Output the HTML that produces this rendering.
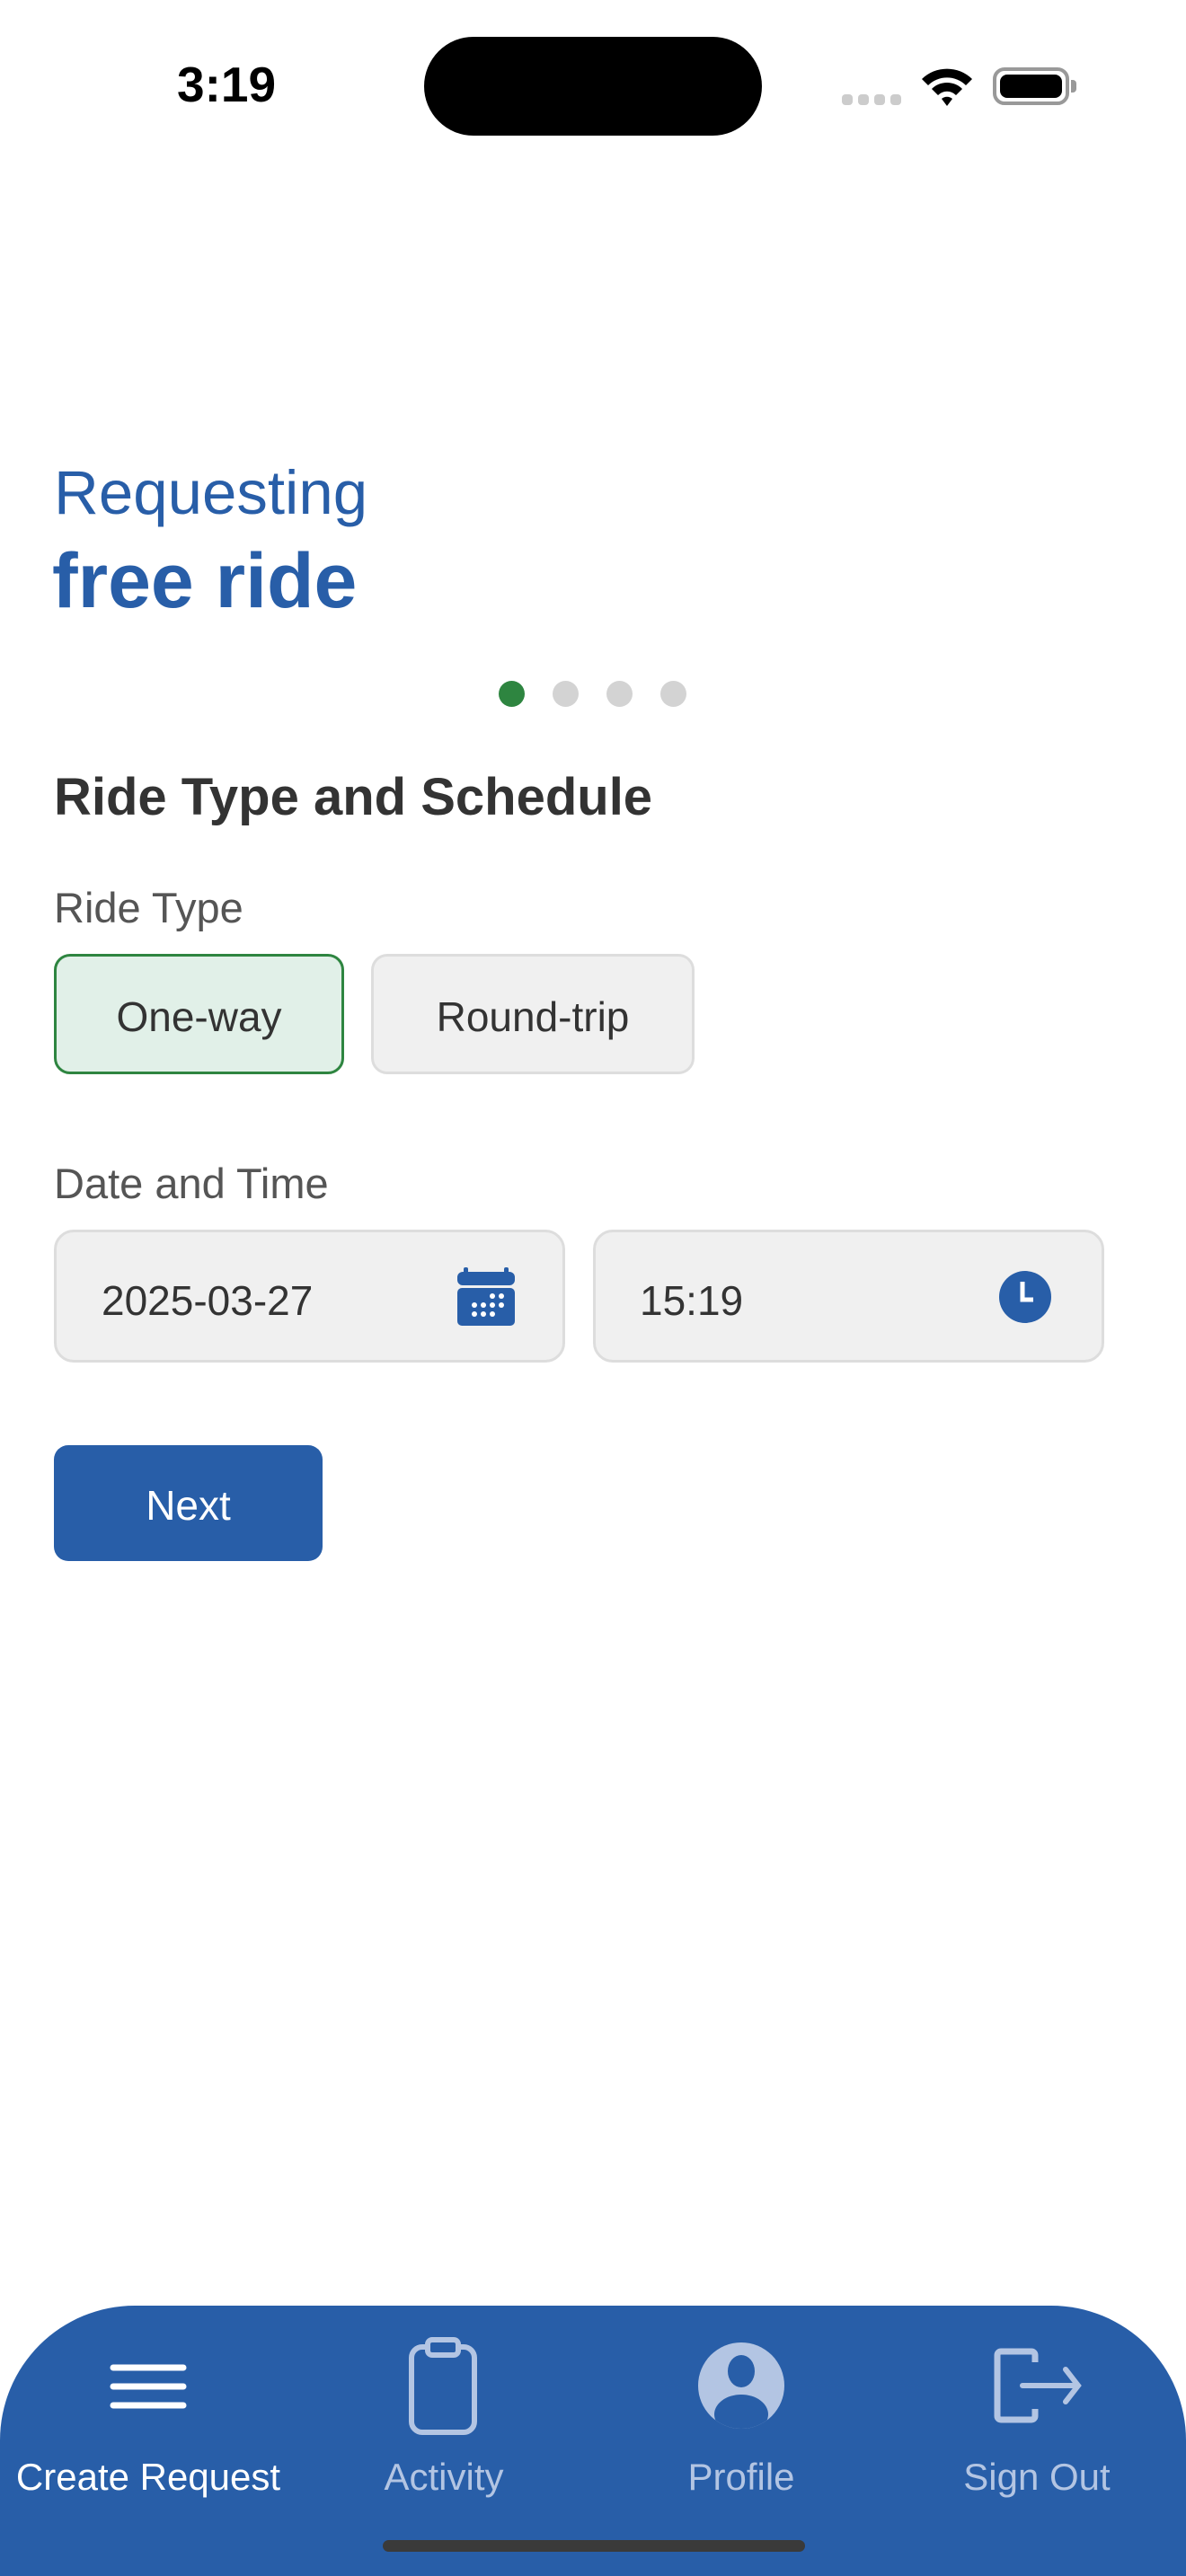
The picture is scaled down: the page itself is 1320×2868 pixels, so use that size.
<!DOCTYPE html>
<html><head><meta charset="utf-8"><style>
*{margin:0;padding:0;box-sizing:border-box}
body{width:1320px;height:2868px;background:#fff;position:relative;overflow:hidden;font-family:"Liberation Sans",sans-serif}
.a{position:absolute;white-space:nowrap;line-height:1}
.btn{position:absolute;border-radius:18px;display:flex;align-items:center;justify-content:center;font-size:46px;color:#333;padding-top:5px}
.inp{position:absolute;top:1369px;height:148px;width:569px;background:#f0f0f0;border:3px solid #ddd;border-radius:22px}
.dot{position:absolute;top:758px;width:29px;height:29px;border-radius:50%;background:#d3d3d3}
.tab{position:absolute;top:2737px;font-size:42px;color:#b3c5e3;line-height:1;text-align:center;width:330px}
</style></head><body>
<div class="a" style="left:197px;top:67px;font-size:55px;font-weight:bold;color:#000">3:19</div>
<div style="position:absolute;left:472px;top:41px;width:376px;height:110px;border-radius:55px;background:#000"></div>
<div style="position:absolute;left:937px;top:105px;width:12px;height:12px;border-radius:4px;background:#ccc"></div>
<div style="position:absolute;left:955px;top:105px;width:12px;height:12px;border-radius:4px;background:#ccc"></div>
<div style="position:absolute;left:973px;top:105px;width:12px;height:12px;border-radius:4px;background:#ccc"></div>
<div style="position:absolute;left:991px;top:105px;width:12px;height:12px;border-radius:4px;background:#ccc"></div>
<svg style="position:absolute;left:1024px;top:74px" width="60" height="46" viewBox="0 0 60 46"><path d="M2 14 A40 40 0 0 1 58 14 L51 21 A30 30 0 0 0 9 21Z M13 25 A24 24 0 0 1 47 25 L40 32 A14 14 0 0 0 20 32Z M24 36 A9 9 0 0 1 36 36 L30 44Z" fill="#000"/></svg>
<div style="position:absolute;left:1105px;top:75px;width:85px;height:42px;border:4px solid #999;border-radius:13px;padding:4px"><div style="width:100%;height:100%;background:#000;border-radius:8px"></div></div>
<div style="position:absolute;left:1192px;top:89px;width:6px;height:14px;background:#999;border-radius:0 4px 4px 0"></div>

<div class="a" style="left:60px;top:514px;font-size:69px;color:#285ea8">Requesting</div>
<div class="a" style="left:58px;top:604px;font-size:86px;font-weight:bold;color:#285ea8">free ride</div>

<div class="dot" style="left:555px;background:#2e8540"></div>
<div class="dot" style="left:615px"></div>
<div class="dot" style="left:675px"></div>
<div class="dot" style="left:735px"></div>

<div class="a" style="left:60px;top:859px;font-size:58px;font-weight:bold;color:#333">Ride Type and Schedule</div>
<div class="a" style="left:60px;top:987px;font-size:47px;color:#555">Ride Type</div>
<div class="btn" style="left:60px;top:1062px;width:323px;height:134px;background:#e1f0e8;border:3px solid #2e8540">One-way</div>
<div class="btn" style="left:413px;top:1062px;width:360px;height:134px;background:#f0f0f0;border:3px solid #ddd">Round-trip</div>

<div class="a" style="left:60px;top:1294px;font-size:47px;color:#555">Date and Time</div>
<div class="inp" style="left:60px"></div>
<div class="inp" style="left:660px"></div>
<div class="a" style="left:113px;top:1425px;font-size:46px;color:#333">2025-03-27</div>
<div class="a" style="left:712px;top:1425px;font-size:46px;color:#333">15:19</div>
<svg style="position:absolute;left:508px;top:1411px" width="66" height="66" viewBox="0 0 66 66"><rect x="8" y="0" width="5" height="10" rx="2" fill="#285ea8"/><rect x="53" y="0" width="5" height="10" rx="2" fill="#285ea8"/><rect x="1" y="5" width="64" height="15" rx="6" fill="#285ea8"/><rect x="1" y="23" width="64" height="42" rx="5" fill="#285ea8"/><g fill="#fff"><circle cx="40" cy="32" r="3"/><circle cx="50" cy="32" r="3"/><circle cx="20" cy="42" r="3"/><circle cx="30" cy="42" r="3"/><circle cx="40" cy="42" r="3"/><circle cx="50" cy="42" r="3"/><circle cx="20" cy="52" r="3"/><circle cx="30" cy="52" r="3"/><circle cx="40" cy="52" r="3"/></g></svg>
<svg style="position:absolute;left:1112px;top:1415px" width="58" height="58" viewBox="0 0 58 58"><circle cx="29" cy="29" r="29" fill="#285ea8"/><path d="M26 12 V32 H38" stroke="#fff" stroke-width="5" fill="none"/></svg>

<div class="btn" style="left:60px;top:1609px;width:299px;height:129px;background:#285ea8;color:#fff;border-radius:16px">Next</div>

<div style="position:absolute;left:0;top:2567px;width:1320px;height:301px;background:#285ea8;border-radius:150px 150px 0 0/150px 150px 0 0"></div>
<svg style="position:absolute;left:122px;top:2632px" width="86" height="50" viewBox="0 0 86 50"><g stroke="#fff" stroke-width="7" stroke-linecap="round"><line x1="4" y1="4" x2="82" y2="4"/><line x1="4" y1="25" x2="82" y2="25"/><line x1="4" y1="46" x2="82" y2="46"/></g></svg>
<svg style="position:absolute;left:454px;top:2602px" width="80" height="110" viewBox="0 0 80 110"><rect x="4" y="11" width="70" height="95" rx="12" fill="none" stroke="#b3c5e3" stroke-width="6"/><rect x="22" y="3" width="34" height="17" rx="5" fill="#285ea8" stroke="#b3c5e3" stroke-width="6"/></svg>
<svg style="position:absolute;left:777px;top:2608px" width="96" height="96" viewBox="0 0 96 96"><defs><clipPath id="c"><circle cx="48" cy="48" r="48"/></clipPath></defs><circle cx="48" cy="48" r="48" fill="#b3c5e3"/><g clip-path="url(#c)" fill="#285ea8"><ellipse cx="48" cy="32" rx="15" ry="18"/><ellipse cx="48" cy="80" rx="30" ry="22"/></g></svg>
<svg style="position:absolute;left:1104px;top:2614px" width="104" height="84" viewBox="0 0 104 84"><path d="M48 16 V8 A4 4 0 0 0 44 4 H10 A4 4 0 0 0 6 8 V76 A4 4 0 0 0 10 80 H44 A4 4 0 0 0 48 76 V68" fill="none" stroke="#b3c5e3" stroke-width="7"/><path d="M34 42 H96 M82 24 L96 42 L82 60" fill="none" stroke="#b3c5e3" stroke-width="6" stroke-linecap="round"/></svg>
<div class="tab" style="left:0;color:#fff">Create Request</div>
<div class="tab" style="left:329px">Activity</div>
<div class="tab" style="left:660px">Profile</div>
<div class="tab" style="left:989px">Sign Out</div>
<div style="position:absolute;left:426px;top:2828px;width:470px;height:13px;border-radius:7px;background:#3a3a3a"></div>
</body></html>
